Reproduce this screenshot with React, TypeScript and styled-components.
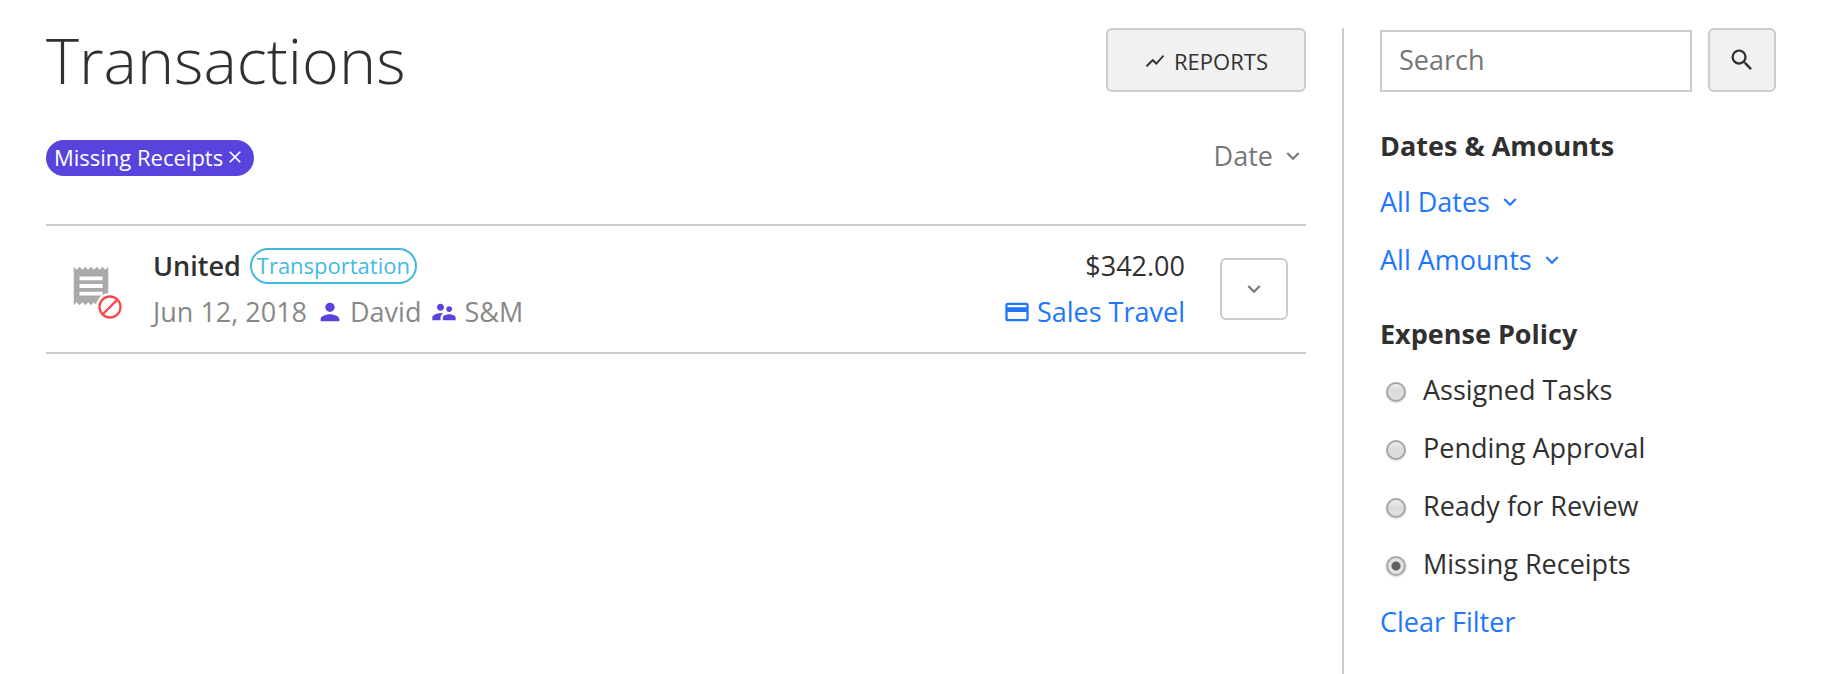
import React, { useState } from "react";
import styled, { createGlobalStyle } from "styled-components";
import {
  MdBlock,
  MdClose,
  MdCreditCard,
  MdExpandMore,
  MdPerson,
  MdReceipt,
  MdSearch,
  MdShowChart,
  MdSupervisorAccount,
} from "react-icons/md";

const color = {
  text: "#303030",
  muted: "#888888",
  placeholder: "#757575",
  line: "#cccccc",
  fill: "#f1f1f1",
  link: "#2176ff",
  purple: "#5844dd",
  cyan: "#44bbdd",
  red: "#ff4444",
  receipt: "#aaaaaa",
};

const GlobalStyle = createGlobalStyle`
  *, *::before, *::after { box-sizing: border-box; }
  body {
    margin: 0;
    background: #ffffff;
    color: ${color.text};
    font: 400 27px/46px "Open Sans", "Noto Sans", sans-serif;
  }
  button, input, select { font: inherit; color: inherit; margin: 0; }
  svg { display: block; flex: none; }
`;

const Page = styled.div`
  display: flex;
  gap: 36px;
  min-height: 100vh;
  padding: 28px 52px 0 46px;
`;

const Main = styled.main`
  flex: 1;
  min-width: 0;
`;

const Header = styled.header`
  display: flex;
  justify-content: space-between;
`;

const Title = styled.h1`
  margin: 0;
  font-size: 63px;
  font-weight: 300;
  line-height: 64px;
`;

const Button = styled.button<{ $wide?: boolean }>`
  display: flex;
  align-items: center;
  justify-content: center;
  gap: 8px;
  flex: none;
  width: ${(p) => (p.$wide ? 200 : 68)}px;
  height: 64px;
  padding: ${(p) => (p.$wide ? 2 : 0)}px 0 0;
  border: 2px solid ${color.line};
  border-radius: 6px;
  background: ${color.fill};
  font-size: 22px;
  line-height: 30px;
  text-transform: uppercase;
  cursor: pointer;
`;

const MenuButton = styled(Button)`
  height: 62px;
  background: #ffffff;
  color: #777777;
`;

const FilterBar = styled.div`
  display: flex;
  justify-content: space-between;
  height: 36px;
  margin: 48px 0;
`;

const FilterChip = styled.button`
  display: flex;
  align-items: center;
  gap: 2px;
  height: 36px;
  padding: 0 9px 2px 8px;
  border: 0;
  border-radius: 18px;
  background: ${color.purple};
  color: #ffffff;
  font-size: 22px;
  font-weight: 500;
  line-height: 34px;
  cursor: pointer;
`;

const SelectBox = styled.span<{ $color: string; $line: number }>`
  display: inline-grid;
  align-items: center;
  justify-items: end;
  height: ${(p) => p.$line}px;
  color: ${(p) => p.$color};

  select, svg { grid-area: 1 / 1; }
  svg { pointer-events: none; }
  select {
    appearance: none;
    field-sizing: content;
    height: ${(p) => p.$line}px;
    padding: 0 33px 0 0;
    border: 0;
    background: transparent;
    line-height: ${(p) => p.$line}px;
    cursor: pointer;
  }
`;

const Transactions = styled.ul`
  margin: 0;
  padding: 0;
  list-style: none;
  border-top: 2px solid ${color.line};
`;

const Transaction = styled.li`
  display: flex;
  align-items: center;
  padding: 17px 18px 17px 22px;
  border-bottom: 2px solid ${color.line};
`;

const ReceiptStatus = styled.span`
  position: relative;
  flex: none;
  width: 85px;
  height: 52px;
  color: ${color.receipt};
`;

const MissingBadge = styled.span`
  position: absolute;
  left: 28px;
  top: 30px;
  border-radius: 50%;
  background: #ffffff;
  color: ${color.red};
`;

const Details = styled.div`
  flex: 1;
  min-width: 0;
`;

const Line = styled.div<{ $muted?: boolean }>`
  display: flex;
  align-items: center;
  gap: 9px;
  height: 46px;
  color: ${(p) => (p.$muted ? color.muted : color.text)};
`;

const Person = styled.span`
  display: flex;
  align-items: center;
  gap: 6px;

  svg { color: ${color.purple}; }
`;

const Merchant = styled.strong`
  font-weight: 600;
`;

const Category = styled.span`
  height: 36px;
  padding: 0 5px;
  border: 2px solid ${color.cyan};
  border-radius: 18px;
  color: ${color.cyan};
  font-size: 22px;
  line-height: 30px;
`;

const Payment = styled.div`
  display: flex;
  flex-direction: column;
  align-items: flex-end;
  margin-right: 35px;
`;

const CardLink = styled.a`
  display: flex;
  align-items: center;
  gap: 6px;
  color: ${color.link};
  text-decoration: none;
`;

const Sidebar = styled.aside`
  flex: none;
  width: 434px;
  padding-left: 36px;
  border-left: 2px solid ${color.line};
`;

const SearchForm = styled.form`
  display: flex;
  align-items: flex-end;
  gap: 16px;
  margin-bottom: 31px;
`;

const SearchInput = styled.input`
  flex: 1;
  min-width: 0;
  height: 62px;
  padding: 0 16px 3px 17px;
  border: 2px solid ${color.line};
  border-radius: 0;
  background: #ffffff;

  &::placeholder { color: ${color.placeholder}; opacity: 1; }
`;

const Section = styled.section`
  display: flex;
  flex-direction: column;
  align-items: flex-start;
  margin-bottom: 22px;
`;

const SectionTitle = styled.h2`
  margin: 0 0 4px;
  font-size: 27px;
  font-weight: 700;
`;

const Option = styled.label`
  display: flex;
  align-items: center;
  gap: 17px;
  padding-left: 6px;
  line-height: 58px;
  cursor: pointer;
`;

const Radio = styled.input`
  && { margin-top: 4px; }
  appearance: none;
  width: 20px;
  height: 20px;
  border: 2px solid #a6a6a6;
  border-radius: 50%;
  background: linear-gradient(#ededed, #dcdcdc 40%, #dedede);
  box-shadow: 0 1px 2px rgba(0, 0, 0, 0.15);

  &:checked {
    background: radial-gradient(circle, #606060 4px, #e2e2e2 5px);
  }
`;

const TextLink = styled.a`
  color: ${color.link};
  line-height: 58px;
  text-decoration: none;
`;

type DropdownProps = { label: string; options: string[]; tint: string; line: number };

function Dropdown({ label, options, tint, line }: DropdownProps) {
  return (
    <SelectBox $color={tint} $line={line}>
      <select aria-label={label}>
        {options.map((option) => (
          <option key={option}>{option}</option>
        ))}
      </select>
      <MdExpandMore size={26} />
    </SelectBox>
  );
}

const policies = ["Assigned Tasks", "Pending Approval", "Ready for Review", "Missing Receipts"];

export default function App() {
  const [policy, setPolicy] = useState("Missing Receipts");

  return (
    <>
      <GlobalStyle />
      <Page>
        <Main>
          <Header>
            <Title>Transactions</Title>
            <Button type="button" $wide>
              <MdShowChart size={22} />
              Reports
            </Button>
          </Header>
          <FilterBar>
            <FilterChip type="button" onClick={() => setPolicy("")}>
              Missing Receipts
              <MdClose size={20} />
            </FilterChip>
            <Dropdown label="Sort by" options={["Date", "Amount"]} tint="#777777" line={32} />
          </FilterBar>
          <Transactions>
            <Transaction>
              <ReceiptStatus>
                <MdReceipt size={46} />
                <MissingBadge>
                  <MdBlock size={28} />
                </MissingBadge>
              </ReceiptStatus>
              <Details>
                <Line>
                  <Merchant>United</Merchant>
                  <Category>Transportation</Category>
                </Line>
                <Line $muted>
                  <span>Jun 12, 2018</span>
                  <Person>
                    <MdPerson size={28} />
                    David
                  </Person>
                  <Person>
                    <MdSupervisorAccount size={28} />
                    S&amp;M
                  </Person>
                </Line>
              </Details>
              <Payment>
                <span>$342.00</span>
                <CardLink href="#sales-travel">
                  <MdCreditCard size={28} />
                  Sales Travel
                </CardLink>
              </Payment>
              <MenuButton type="button" aria-label="Transaction actions">
                <MdExpandMore size={26} />
              </MenuButton>
            </Transaction>
          </Transactions>
        </Main>
        <Sidebar>
          <SearchForm onSubmit={(event) => event.preventDefault()}>
            <SearchInput type="text" placeholder="Search" aria-label="Search" />
            <Button type="submit" aria-label="Search">
              <MdSearch size={28} />
            </Button>
          </SearchForm>
          <Section>
            <SectionTitle>Dates &amp; Amounts</SectionTitle>
            <Dropdown label="Dates" options={["All Dates", "This Month"]} tint={color.link} line={58} />
            <Dropdown label="Amounts" options={["All Amounts", "Over $100"]} tint={color.link} line={58} />
          </Section>
          <Section>
            <SectionTitle>Expense Policy</SectionTitle>
            {policies.map((name) => (
              <Option key={name}>
                <Radio
                  type="radio"
                  name="policy"
                  checked={policy === name}
                  onChange={() => setPolicy(name)}
                />
                {name}
              </Option>
            ))}
            <TextLink href="#clear">Clear Filter</TextLink>
          </Section>
        </Sidebar>
      </Page>
    </>
  );
}
